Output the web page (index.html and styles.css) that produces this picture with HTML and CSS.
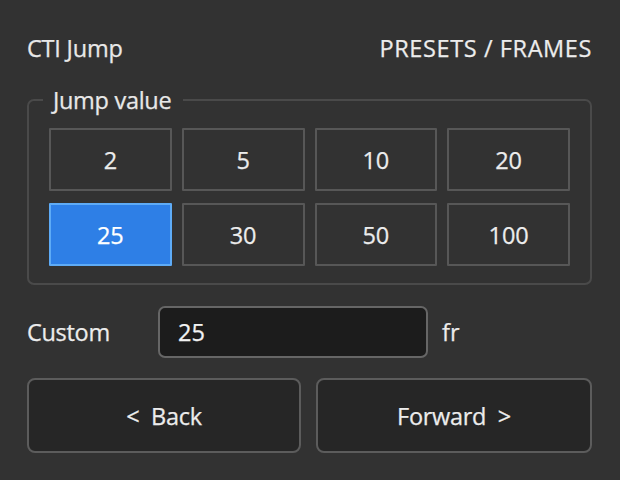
FILE: index.html
```html
<!DOCTYPE html>
<html lang="en">
<head>
<meta charset="utf-8">
<title>CTI Jump</title>
<link rel="stylesheet" href="styles.css">
</head>
<body>
<div class="panel">
  <header class="head">
    <span class="title">CTI Jump</span>
    <span class="mode">PRESETS / FRAMES</span>
  </header>
  <fieldset class="group">
    <legend class="legend">Jump value</legend>
    <div class="grid">
      <button class="preset">2</button>
      <button class="preset">5</button>
      <button class="preset">10</button>
      <button class="preset">20</button>
      <button class="preset active">25</button>
      <button class="preset">30</button>
      <button class="preset">50</button>
      <button class="preset">100</button>
    </div>
  </fieldset>
  <div class="custom">
    <label class="custom-label" for="cv">Custom</label>
    <input id="cv" class="custom-input" type="text" value="25">
    <span class="unit">fr</span>
  </div>
  <div class="actions">
    <button class="action">&lt;&nbsp; Back</button>
    <button class="action">Forward &nbsp;&gt;</button>
  </div>
</div>
</body>
</html>
```
FILE: styles.css
```css
html, body {
  margin: 0;
  height: 100%;
  background: #323232;
}
body {
  font-family: "Open Sans", "Noto Sans", sans-serif;
  font-size: 23.5px;
  font-weight: 500;
  color: #ececec;
  -webkit-text-stroke: 0.25px currentColor;
}
.panel {
  padding: 34px 28px 0 27px;
}
.head {
  display: flex;
  justify-content: space-between;
  align-items: center;
  height: 28px;
  line-height: 28px;
  letter-spacing: -0.2px;
}
.title { color: #e8e8e8; }
.mode { color: #ececec; letter-spacing: 0.6px; }

.group {
  margin: 24px 0 0 0;
  padding: 0 20px 17px 20px;
  border: 2px solid #4a4a4a;
  border-radius: 7px;
  min-width: 0;
}
.legend {
  margin-left: -6px;
  padding: 0 12px 0 10px;
  line-height: 28px;
  letter-spacing: -0.3px;
  color: #e8e8e8;
}
.grid {
  margin-top: 14px;
  display: grid;
  grid-template-columns: repeat(4, 1fr);
  column-gap: 10px;
  row-gap: 12px;
}
.preset {
  height: 63px;
  font: inherit;
  color: #ececec;
  background: #323232;
  border: 2px solid #575757;
  border-radius: 1px;
  padding: 0;
}
.preset.active {
  background: #2e7fe6;
  border-color: #5eabf6;
  color: #ffffff;
}

.custom {
  display: flex;
  align-items: center;
  margin-top: 21px;
  height: 52px;
}
.custom-label {
  width: 131px;
  letter-spacing: -0.3px;
}
.custom-input {
  box-sizing: border-box;
  width: 270px;
  height: 52px;
  padding: 0 18px;
  font: inherit;
  color: #f2f2f2;
  background: #1c1c1c;
  border: 2px solid #666666;
  border-radius: 7px;
  outline: none;
}
.unit {
  margin-left: 14px;
}

.actions {
  display: grid;
  grid-template-columns: 274px 1fr;
  column-gap: 15px;
  margin-top: 20px;
}
.action {
  height: 75px;
  font: inherit;
  letter-spacing: -0.3px;
  color: #ececec;
  background: #262626;
  border: 2px solid #5c5c5c;
  border-radius: 8px;
  padding: 0;
}
```
